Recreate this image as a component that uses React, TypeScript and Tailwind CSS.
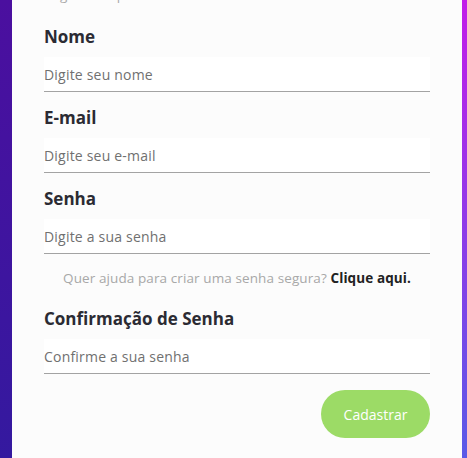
import React from "react";

const fields = [
  { label: "Nome", placeholder: "Digite seu nome", type: "text" },
  { label: "E-mail", placeholder: "Digite seu e-mail", type: "email" },
  { label: "Senha", placeholder: "Digite a sua senha", type: "password" },
];

function Field({ label, placeholder, type }: { label: string; placeholder: string; type: string }) {
  return (
    <div className="flex flex-col">
      <label className="text-[17px] leading-[24px] font-bold text-[#2b2b33] mb-[8px]">{label}</label>
      <input
        type={type}
        placeholder={placeholder}
        className="w-full h-[35px] bg-white border-0 border-b border-[#a3a3a3] outline-none text-[14px] tracking-[0.2px] text-[#333] placeholder:text-[#707070] px-0"
      />
    </div>
  );
}

export default function App() {
  return (
    <div
      className="w-[467px] h-[458px] overflow-hidden flex pl-[12px] pr-[5px] [background:linear-gradient(to_bottom,#4b0f9f,#34199f)_left/12px_100%_no-repeat,linear-gradient(to_bottom,#c21de9,#5a5ae7)_right/5px_100%_no-repeat]"
      style={{ fontFamily: '"Open Sans", "Noto Sans", sans-serif' }}
    >
      <div className="flex-1 min-w-0 overflow-hidden bg-[#fcfcfc] px-[32px] flex flex-col">
        <p className="mt-[-13px] text-[13.5px] leading-[16px] text-[#aaa] whitespace-nowrap overflow-hidden">
          Registre-se para utilizar todas as funcionalidades do sistema
        </p>
        <div className="mt-[22px] flex flex-col gap-[14px]">
          {fields.map((f) => (
            <Field key={f.label} {...f} />
          ))}
        </div>
        <p className="mt-[16px] text-center text-[13.5px] leading-[16px] tracking-[0.1px] text-[#a8a8a8] whitespace-nowrap">
          Quer ajuda para criar uma senha segura? <span className="font-bold text-[#222]">Clique aqui.</span>
        </p>
        <div className="mt-[21px]">
          <Field label="Confirmação de Senha" placeholder="Confirme a sua senha" type="password" />
        </div>
        <div className="flex justify-end mt-[16px]">
          <button className="w-[109px] h-[48px] rounded-full bg-[#9cdb66] text-white text-[14px]">Cadastrar</button>
        </div>
      </div>
    </div>
  );
}
